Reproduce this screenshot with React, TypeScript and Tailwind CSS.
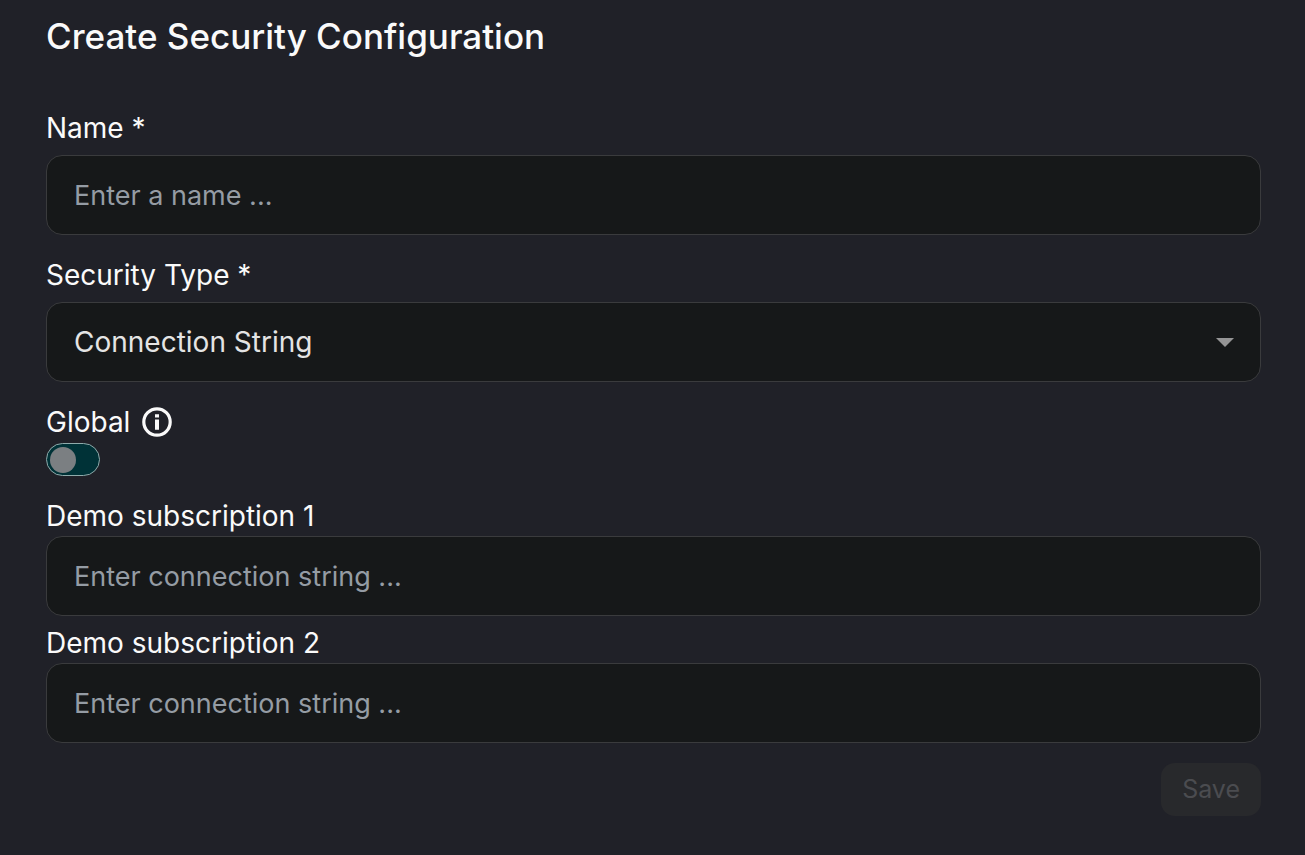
import { useState } from "react";
import type { InputHTMLAttributes } from "react";

const boxClass =
  "h-20 w-full rounded-2xl border border-[#3a3b3d] bg-[#161819] px-[27px] outline-none focus:border-[#7f9c9c]";
const labelClass = "text-[28px] leading-10 text-[#fafafa]";

function TextField({
  id,
  label,
  spaced = false,
  ...rest
}: { id: string; label: string; spaced?: boolean } & InputHTMLAttributes<HTMLInputElement>) {
  return (
    <div className={spaced ? "flex flex-col gap-[7px]" : "flex flex-col"}>
      <label htmlFor={id} className={labelClass}>
        {label}
      </label>
      <input
        id={id}
        type="text"
        className={`${boxClass} text-[27px] text-[#e4e4e4] placeholder:text-[#959ca4]`}
        {...rest}
      />
    </div>
  );
}

function InfoIcon() {
  return (
    <svg viewBox="0 0 30 30" className="size-[30px]" aria-hidden="true">
      <circle cx="15" cy="15" r="13.2" fill="none" stroke="#fafafa" strokeWidth="3.2" />
      <path d="M13 7.2h4v3.2h-4zM13 12.6h4v10.2h-4z" fill="#fafafa" />
    </svg>
  );
}

export default function App() {
  const [name, setName] = useState("");
  const [global, setGlobal] = useState(false);

  return (
    <main className="min-h-screen bg-[#202128] pt-3 pr-11 pb-10 pl-[46px] font-['Inter',sans-serif]">
      <h1 className="text-[35px] leading-[48px] font-medium text-[#fafafa]">Create Security Configuration</h1>

      <form className="mt-12 flex flex-col gap-5" onSubmit={(e) => e.preventDefault()}>
        <TextField
          id="name"
          label="Name *"
          spaced
          placeholder="Enter a name ..."
          value={name}
          onChange={(e) => setName(e.target.value)}
        />

        <div className="flex flex-col gap-[7px]">
          <label htmlFor="security-type" className={labelClass}>
            Security Type *
          </label>
          <div className="grid items-center">
            <select
              id="security-type"
              className={`${boxClass} col-start-1 row-start-1 appearance-none text-[28px] text-[#e4e4e4]`}
            >
              <option>Connection String</option>
            </select>
            <svg
              viewBox="0 0 18 9"
              className="pointer-events-none col-start-1 row-start-1 mr-[27px] h-[9px] w-[18px] justify-self-end"
              aria-hidden="true"
            >
              <path d="M0 0h18L9 9z" fill="#959596" />
            </svg>
          </div>
        </div>

        <div className="flex flex-col items-start gap-px">
          <div className="flex items-center gap-3">
            <label htmlFor="global" className={labelClass}>
              Global
            </label>
            <InfoIcon />
          </div>
          <input
            id="global"
            type="checkbox"
            role="switch"
            checked={global}
            onChange={(e) => setGlobal(e.target.checked)}
            className="flex h-[33px] w-[54px] appearance-none items-center rounded-full border border-[#8fabab] bg-[#003237] px-[3px] before:size-[26px] before:rounded-full before:bg-[#7b7f82] checked:justify-end checked:before:bg-[#d5d8da]"
          />
        </div>

        <div className="flex flex-col gap-[7px]">
          <TextField id="subscription-1" label="Demo subscription 1" placeholder="Enter connection string ..." />
          <TextField id="subscription-2" label="Demo subscription 2" placeholder="Enter connection string ..." />
        </div>

        <button
          type="submit"
          disabled={name === ""}
          className="h-[53px] self-end rounded-[14px] bg-[#3a3b3f] px-[21px] text-[25px] text-[#fafafa] disabled:bg-[#28292c] disabled:text-[#4b4c50]"
        >
          Save
        </button>
      </form>
    </main>
  );
}
